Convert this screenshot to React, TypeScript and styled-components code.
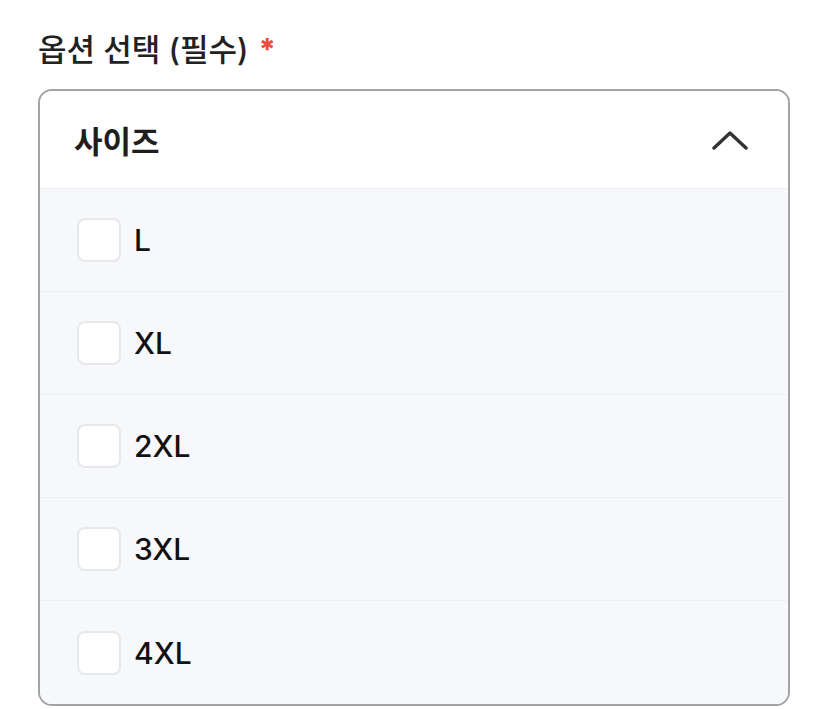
import React, { useState } from 'react';
import styled, { createGlobalStyle } from 'styled-components';

const GlobalStyle = createGlobalStyle`
  body {
    margin: 0;
    background: #ffffff;
    font-family: 'Inter', 'Noto Sans CJK KR', sans-serif;
  }
`;

const Page = styled.div`
  padding: 25px 38px 0 38px;
`;

const Title = styled.div`
  display: flex;
  align-items: center;
  gap: 10px;
  font-size: 31px;
  font-weight: 500;
  color: #222222;
  height: 44px;
  margin-bottom: 20px;
`;

const Required = styled.span`
  color: #f04a3a;
  font-size: 30px;
  font-weight: 800;
  line-height: 1;
  margin-top: 4px;
`;

const Box = styled.div`
  width: 752px;
  border: 2px solid #a3a3a3;
  border-radius: 14px;
  overflow: hidden;
  box-sizing: border-box;
`;

const Header = styled.button`
  display: flex;
  align-items: center;
  justify-content: space-between;
  width: 100%;
  height: 98px;
  padding: 0 40px 0 34px;
  border: none;
  border-bottom: 1px solid #eeeff2;
  background: #ffffff;
  font-family: inherit;
  font-size: 31px;
  font-weight: 700;
  color: #1e1e1e;
  cursor: pointer;
  box-sizing: border-box;
`;

const List = styled.div`
  background: #f7f8fb;
`;

const Row = styled.label`
  display: flex;
  align-items: center;
  gap: 13px;
  height: 103px;
  padding: 0 37px;
  box-sizing: border-box;
  border-bottom: 1px solid #eef0f3;
  cursor: pointer;

  &:last-child {
    border-bottom: none;
  }
`;

const Check = styled.span<{ checked: boolean }>`
  width: 44px;
  height: 44px;
  box-sizing: border-box;
  border: 2px solid ${p => (p.checked ? '#3a6cf4' : '#e7e8ea')};
  border-radius: 8px;
  background: ${p => (p.checked ? '#3a6cf4' : '#ffffff')};
  display: flex;
  align-items: center;
  justify-content: center;
`;

const RowText = styled.span`
  font-size: 30px;
  font-weight: 500;
  color: #111111;
`;

const sizes = ['L', 'XL', '2XL', '3XL', '4XL'];

const App = () => {
  const [open, setOpen] = useState(true);
  const [picked, setPicked] = useState<string[]>([]);

  const toggle = (s: string) =>
    setPicked(prev => (prev.includes(s) ? prev.filter(x => x !== s) : [...prev, s]));

  return (
    <Page>
      <GlobalStyle />
      <Title>
        옵션 선택 (필수)
        <Required>*</Required>
      </Title>
      <Box>
        <Header onClick={() => setOpen(!open)}>
          사이즈
          <svg width="36" height="20" viewBox="0 0 36 20" fill="none">
            <polyline
              points={open ? '2,18 18,3 34,18' : '2,2 18,17 34,2'}
              stroke="#333333"
              strokeWidth="3.4"
              strokeLinecap="round"
              strokeLinejoin="round"
            />
          </svg>
        </Header>
        {open && (
          <List>
            {sizes.map(s => (
              <Row key={s} onClick={() => toggle(s)}>
                <Check checked={picked.includes(s)} />
                <RowText>{s}</RowText>
              </Row>
            ))}
          </List>
        )}
      </Box>
    </Page>
  );
};

export default App;
